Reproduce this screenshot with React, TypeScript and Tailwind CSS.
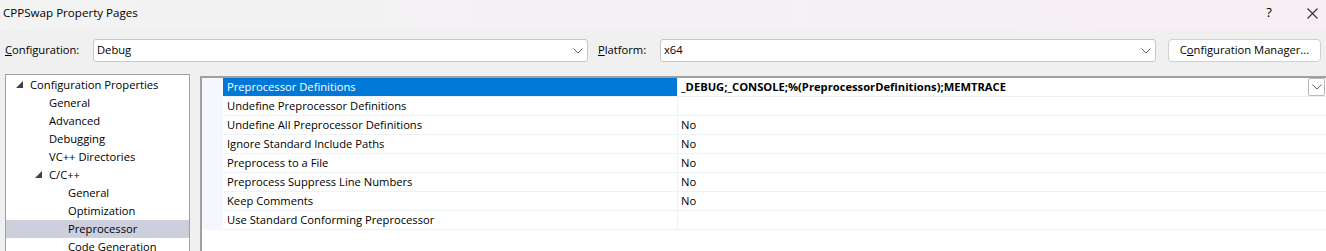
import React from 'react';

const font = { fontFamily: '"Segoe UI", "Open Sans", "Noto Sans", sans-serif' };

const Chevron = ({ className = '' }: { className?: string }) => (
    <svg viewBox="0 0 10 6" width="10" height="6" className={className} fill="none" stroke="#606060" strokeWidth="1">
        <path d="M0.5 0.5 L5 5 L9.5 0.5" />
    </svg>
);

const Tri = () => (
    <svg viewBox="0 0 7 7" width="7" height="7">
        <path d="M7 0 L7 7 L0 7 Z" fill="#404040" />
    </svg>
);

type TreeItem = { label: string; level: number; open?: boolean; selected?: boolean };

const tree: TreeItem[] = [
    { label: 'Configuration Properties', level: 0, open: true },
    { label: 'General', level: 1 },
    { label: 'Advanced', level: 1 },
    { label: 'Debugging', level: 1 },
    { label: 'VC++ Directories', level: 1 },
    { label: 'C/C++', level: 1, open: true },
    { label: 'General', level: 2 },
    { label: 'Optimization', level: 2 },
    { label: 'Preprocessor', level: 2, selected: true },
    { label: 'Code Generation', level: 2 },
];

const rows: { name: string; value: string; bold?: boolean }[] = [
    { name: 'Preprocessor Definitions', value: '_DEBUG;_CONSOLE;%(PreprocessorDefinitions);MEMTRACE', bold: true },
    { name: 'Undefine Preprocessor Definitions', value: '' },
    { name: 'Undefine All Preprocessor Definitions', value: 'No' },
    { name: 'Ignore Standard Include Paths', value: 'No' },
    { name: 'Preprocess to a File', value: 'No' },
    { name: 'Preprocess Suppress Line Numbers', value: 'No' },
    { name: 'Keep Comments', value: 'No' },
    { name: 'Use Standard Conforming Preprocessor', value: '' },
];

const indent = ['pl-[24px]', 'pl-[43px]', 'pl-[62px]'];
const triPos = ['left-[10px]', 'left-[29px]', 'left-[48px]'];

export default function App() {
    return (
        <div className="w-[1326px] h-[251px] overflow-hidden bg-[#f0f0f0] text-[11.2px] text-black" style={font}>
            {/* title bar */}
            <div className="h-[30px] flex items-center justify-between bg-gradient-to-r from-[#f3f3f3] via-[#f4f1f4] to-[#f7eff5]">
                <div className="pl-[3px] pb-[4px] text-[11.6px]">CPPSwap Property Pages</div>
                <div className="flex items-center pb-[4px]">
                    <span className="w-[20px] text-center text-[13px] mr-[28px]">?</span>
                    <svg viewBox="0 0 11 11" width="11" height="11" className="mr-[8px]" stroke="#333" strokeWidth="1.1">
                        <path d="M0.5 0.5 L10.5 10.5 M10.5 0.5 L0.5 10.5" />
                    </svg>
                </div>
            </div>

            {/* configuration row */}
            <div className="mt-[9px] h-[23px] flex items-center">
                <span className="ml-[5px] w-[88px]"><u>C</u>onfiguration:</span>
                <div className="w-[495px] h-[23px] bg-white border border-[#c8c8c8] rounded-[3px] flex items-center justify-between pl-[3px] pr-[4px]">
                    <span>Debug</span>
                    <Chevron />
                </div>
                <span className="ml-[10px] w-[62px]"><u>P</u>latform:</span>
                <div className="w-[496px] h-[23px] bg-white border border-[#c8c8c8] rounded-[3px] flex items-center justify-between pl-[3px] pr-[4px]">
                    <span>x64</span>
                    <Chevron />
                </div>
                <div className="ml-[12px] w-[153px] h-[23px] bg-white border border-[#d0d0d0] rounded-[4px] flex items-center justify-center">
                    <span>C<u>o</u>nfiguration Manager...</span>
                </div>
            </div>

            {/* panels */}
            <div className="mt-[12px] flex items-start">
                <div className="ml-[5px] w-[185px] h-[200px] bg-white border border-[#a0a0a0] pt-[1px]">
                    {tree.map((t, i) => (
                        <div key={i} className={`relative h-[18px] leading-[18px] ${indent[t.level]} ${t.selected ? 'bg-[#cdd0dc]' : ''}`}>
                            {t.open && (
                                <span className={`absolute top-[5px] ${triPos[t.level]}`}>
                                    <Tri />
                                </span>
                            )}
                            {t.label}
                        </div>
                    ))}
                </div>

                <div className="ml-[10px] mt-[2px] w-[1126px] h-[200px] bg-white border-l-2 border-t-2 border-[#a0a0a0]">
                    <div className="flex">
                        <div className="w-[21px] h-[152px] bg-[#f4f7fc]" />
                        <div className="flex-1">
                            {rows.map((r, i) => (
                                <div key={i} className="flex h-[19px] border-b border-[#eef1f6]">
                                    <div className={`w-[455px] leading-[18px] pl-[4px] border-r border-[#eef1f6] ${i === 0 ? 'bg-[#0078d7] text-white' : ''}`}>
                                        {r.name}
                                    </div>
                                    <div className={`flex-1 flex items-center justify-between pl-[3px] ${r.bold ? 'font-bold' : ''}`}>
                                        <span className="leading-[18px]">{r.value}</span>
                                        {i === 0 && (
                                            <span className="w-[17px] h-[18px] border border-[#b8b8b8] rounded-[2px] flex items-center justify-center mr-[1px] bg-white">
                                                <Chevron />
                                            </span>
                                        )}
                                    </div>
                                </div>
                            ))}
                        </div>
                    </div>
                </div>
            </div>
        </div>
    );
}
